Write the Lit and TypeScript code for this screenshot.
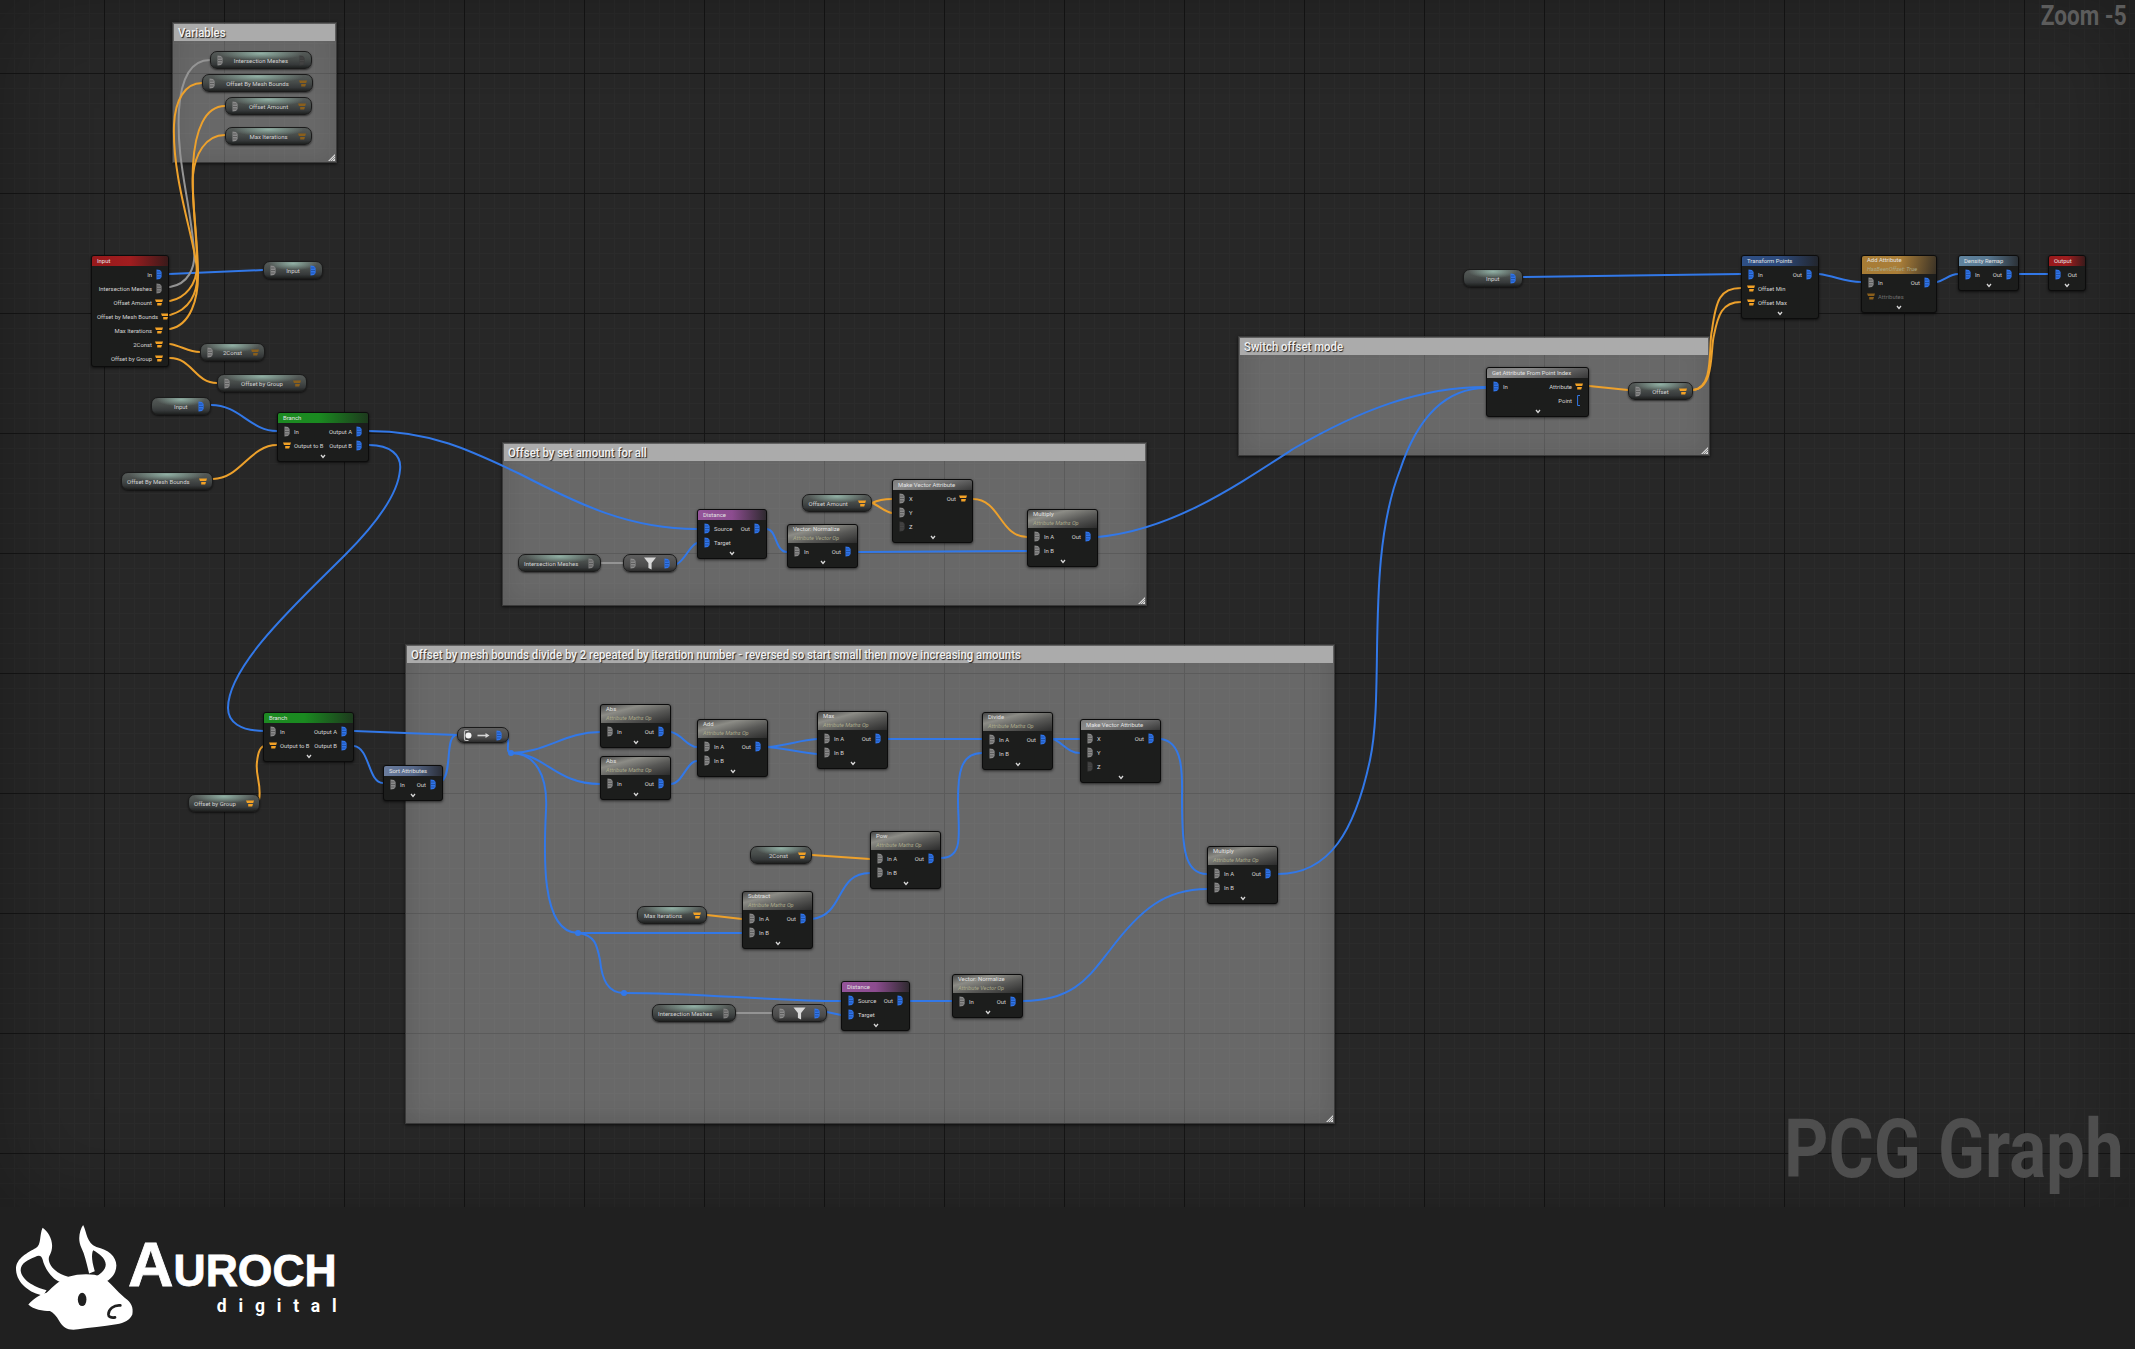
import { LitElement, html, css, svg } from "lit";
import { customElement } from "lit/decorators.js";

type Pin = "" | "g" | "b" | "o" | "d" | "h" | "m" | "n";
type Row = [Pin, string, string, Pin, boolean?];
interface NodeDef { x: number; y: number; w: number; title: string; sub?: string; tone: string; rows: Row[]; chev?: boolean; }
interface PillDef { x: number; y: number; w: number; h?: number; label?: string; l?: Pin; r?: Pin; icon?: string; lx?: number; }

const SUB = "Attribute Maths Op";
const math = (x: number, y: number, title: string, rows: Row[], sub = SUB, w = 71): NodeDef => ({ x, y, w, title, sub, tone: "math", rows, chev: true });
const ab: Row[] = [["g", "In A", "Out", "b"], ["g", "In B", "", ""]];

const NODES: NodeDef[] = [
  { x: 91, y: 255, w: 78, title: "Input", tone: "red", rows: [["", "", "In", "b"], ["", "", "Intersection Meshes", "n"], ["", "", "Offset Amount", "o"], ["", "", "Offset by Mesh Bounds", "o"], ["", "", "Max Iterations", "o"], ["", "", "2Const", "o"], ["", "", "Offset by Group", "o"]] },
  { x: 277, y: 412, w: 92, title: "Branch", tone: "green", chev: true, rows: [["g", "In", "Output A", "b"], ["o", "Output to B", "Output B", "b"]] },
  { x: 263, y: 712, w: 91, title: "Branch", tone: "green", chev: true, rows: [["g", "In", "Output A", "b"], ["o", "Output to B", "Output B", "b"]] },
  { x: 383, y: 765, w: 60, title: "Sort Attributes", tone: "slate", chev: true, rows: [["g", "In", "Out", "b"]] },
  { x: 697, y: 509, w: 70, title: "Distance", tone: "purple", chev: true, rows: [["b", "Source", "Out", "b"], ["b", "Target", "", ""]] },
  math(787, 524, "Vector: Normalize", [["g", "In", "Out", "b"]], "Attribute Vector Op"),
  { x: 892, y: 479, w: 81, title: "Make Vector Attribute", tone: "gray", chev: true, rows: [["g", "X", "Out", "o"], ["g", "Y", "", ""], ["d", "Z", "", ""]] },
  math(1027, 509, "Multiply", ab),
  math(600, 704, "Abs", [["g", "In", "Out", "b"]]),
  math(600, 756, "Abs", [["g", "In", "Out", "b"]]),
  math(697, 719, "Add", ab),
  math(817, 711, "Max", ab),
  math(982, 712, "Divide", ab),
  { x: 1080, y: 719, w: 81, title: "Make Vector Attribute", tone: "gray", chev: true, rows: [["g", "X", "Out", "b"], ["g", "Y", "", ""], ["d", "Z", "", ""]] },
  math(1207, 846, "Multiply", ab),
  math(870, 831, "Pow", ab),
  math(742, 891, "Subtract", ab),
  { x: 841, y: 981, w: 69, title: "Distance", tone: "purple", chev: true, rows: [["b", "Source", "Out", "b"], ["b", "Target", "", ""]] },
  math(952, 974, "Vector: Normalize", [["g", "In", "Out", "b"]], "Attribute Vector Op"),
  { x: 1486, y: 367, w: 103, title: "Get Attribute From Point Index", tone: "gray", chev: true, rows: [["b", "In", "Attribute", "o"], ["", "", "Point", "h"]] },
  { x: 1741, y: 255, w: 78, title: "Transform Points", tone: "blue", chev: true, rows: [["b", "In", "Out", "b"], ["o", "Offset Min", "", ""], ["o", "Offset Max", "", ""]] },
  { x: 1861, y: 255, w: 76, title: "Add Attribute", sub: "HasBeenOffset: True", tone: "amber", chev: true, rows: [["g", "In", "Out", "b"], ["m", "Attributes", "", "", true]] },
  { x: 1958, y: 255, w: 61, title: "Density Remap", tone: "steel", chev: true, rows: [["b", "In", "Out", "b"]] },
  { x: 2048, y: 255, w: 38, title: "Output", tone: "red", chev: true, rows: [["b", "", "Out", ""]] },
];

const PILLS: PillDef[] = [
  { x: 210, y: 51, w: 102, label: "Intersection Meshes", l: "g", r: "d" },
  { x: 202, y: 74, w: 111, label: "Offset By Mesh Bounds", l: "g", r: "m" },
  { x: 225, y: 97, w: 87, label: "Offset Amount", l: "g", r: "m" },
  { x: 225, y: 127, w: 87, label: "Max Iterations", l: "g", r: "m" },
  { x: 263, y: 261, w: 60, label: "Input", l: "g", r: "b" },
  { x: 200, y: 343, w: 65, label: "2Const", l: "g", r: "m" },
  { x: 217, y: 374, w: 90, label: "Offset by Group", l: "g", r: "m" },
  { x: 151, y: 397, w: 60, label: "Input", r: "b", lx: 23 },
  { x: 121, y: 472, w: 92, label: "Offset By Mesh Bounds", r: "o", lx: 5 },
  { x: 188, y: 794, w: 72, label: "Offset by Group", r: "o", lx: 6 },
  { x: 518, y: 554, w: 83, label: "Intersection Meshes", r: "n", lx: 6 },
  { x: 623, y: 554, w: 54, l: "g", r: "b", icon: "funnel" },
  { x: 802, y: 494, w: 70, label: "Offset Amount", r: "o", lx: 6.5 },
  { x: 750, y: 846, w: 62, label: "2Const", r: "o", lx: 19 },
  { x: 637, y: 906, w: 70, label: "Max Iterations", r: "o", lx: 7 },
  { x: 652, y: 1004, w: 84, label: "Intersection Meshes", r: "n", lx: 6 },
  { x: 772, y: 1004, w: 55, l: "g", r: "b", icon: "funnel" },
  { x: 1463, y: 269, w: 60, label: "Input", r: "b", lx: 23 },
  { x: 1628, y: 382, w: 65, label: "Offset", l: "g", r: "o" },
  { x: 457, y: 727, w: 52, h: 16, r: "b", icon: "arrow" },
];

const BLUE = "#3278e8", ORANGE = "#eda12c", GRAY = "#949494";
const WIRES: [string, string][] = [
  [BLUE, "M169 274 L263 270"],
  [GRAY, "M170 287 C 188 284 196 268 194 250 C 190 200 176 160 179 110 C 181 80 190 60 210 60"],
  [ORANGE, "M170 301 C 185 298 197 285 197 265 C 197 230 191 200 193 165 C 195 130 205 106 225 106"],
  [ORANGE, "M170 315 C 188 310 199 295 197 270 C 195 240 172 180 174 125 C 175 100 185 83 202 83"],
  [ORANGE, "M170 329 C 190 325 199 300 198 270 C 197 230 191 195 193 175 C 195 155 205 135 225 135"],
  [ORANGE, "M170 344 C 182 346 188 352 200 352"],
  [ORANGE, "M170 358 C 192 358 195 383 217 383"],
  [BLUE, "M211 405 C 240 405 250 431 277 431"],
  [ORANGE, "M213 479 C 240 479 250 445 277 445"],
  [BLUE, "M369 431 C 430 431 470 450 520 474 C 580 505 630 529 697 529"],
  [BLUE, "M369 445 C 390 445 402 455 400 470 C 398 495 375 525 345 555 C 300 600 228 665 228 708 C 228 722 240 731 265 731"],
  [ORANGE, "M259 800 C 262 785 255 775 257 762 C 258 752 260 746 265 746"],
  [BLUE, "M354 731 L457 735"],
  [BLUE, "M354 746 C 370 748 368 783 383 783"],
  [BLUE, "M443 780 C 452 770 445 735 457 735"],
  [BLUE, "M505 736 C 512 738 504 753 511 753"],
  [BLUE, "M511 753 C 545 753 565 732 600 732"],
  [BLUE, "M511 753 C 545 753 555 784 600 784"],
  [BLUE, "M511 753 C 535 753 548 775 546 810 C 544 850 540 933 578 933"],
  [BLUE, "M578 933 L742 933"],
  [BLUE, "M578 933 C 595 935 597 945 600 960 C 602 980 608 993 624 993"],
  [BLUE, "M624 993 C 700 993 770 1001 841 1001"],
  [GRAY, "M736 1013 L772 1013"],
  [BLUE, "M827 1012 L841 1015"],
  [BLUE, "M910 1001 L952 1001"],
  [BLUE, "M1023 1001 C 1075 1001 1090 975 1110 950 C 1140 910 1165 889 1207 889"],
  [BLUE, "M671 732 C 682 734 687 747 697 747"],
  [BLUE, "M671 784 C 682 784 687 761 697 761"],
  [BLUE, "M767 747 C 785 746 800 740 817 739"],
  [BLUE, "M767 747 C 785 748 800 753 817 754"],
  [BLUE, "M887 739 L982 739"],
  [BLUE, "M1053 739 L1080 739"],
  [BLUE, "M1053 739 C 1062 742 1068 753 1080 753"],
  [BLUE, "M1161 739 C 1185 742 1182 780 1182 800 C 1182 850 1185 874 1207 874"],
  [BLUE, "M941 858 C 965 858 958 830 958 800 C 958 775 960 753 982 753"],
  [BLUE, "M812 919 C 845 915 835 873 870 873"],
  [ORANGE, "M812 855 L870 859"],
  [ORANGE, "M707 915 L742 919"],
  [BLUE, "M1278 874 C 1330 874 1355 830 1370 760 C 1385 690 1365 560 1400 470 C 1420 410 1450 388 1486 388"],
  [BLUE, "M1098 537 C 1170 530 1230 490 1293 449 C 1360 410 1420 387 1486 387"],
  [GRAY, "M601 563 L623 563"],
  [BLUE, "M677 564 C 685 560 690 545 697 543"],
  [BLUE, "M767 529 C 777 530 775 552 787 552"],
  [BLUE, "M859 552 L1027 551"],
  [ORANGE, "M872 503 C 878 500 885 499 892 499"],
  [ORANGE, "M872 503 C 878 505 885 512 892 513"],
  [ORANGE, "M973 499 C 1000 499 1000 537 1027 537"],
  [ORANGE, "M1589 386 L1628 390"],
  [ORANGE, "M1693 390 C 1715 388 1708 345 1712 330 C 1716 300 1720 288 1741 288"],
  [ORANGE, "M1693 390 C 1715 388 1710 350 1714 335 C 1718 315 1722 302 1741 302"],
  [BLUE, "M1523 277 L1741 274"],
  [BLUE, "M1819 274 C 1835 276 1845 282 1861 282"],
  [BLUE, "M1937 282 C 1945 280 1950 274 1958 274"],
  [BLUE, "M2019 274 L2048 274"],
];

const DOTS = [[511, 753], [578, 933], [624, 993]];

const COMMENTS = [
  { x: 172, y: 22, w: 165, h: 141, t: "Variables" },
  { x: 502, y: 442, w: 645, h: 164, t: "Offset by set amount for all" },
  { x: 405, y: 644, w: 930, h: 480, t: "Offset by mesh bounds divide by 2 repeated by iteration number - reversed so start small then move increasing amounts" },
  { x: 1238, y: 336, w: 472, h: 120, t: "Switch offset mode" },
];

const pinIcon = (k: Pin) => {
  if (!k) return html`<span class="pin"></span>`;
  if (k === "o" || k === "m") {
    const c = k === "o" ? "#f2a126" : "#8a5f1c";
    return html`<svg class="pin" viewBox="0 0 8 11">${svg`<path fill=${c} d="M0 2.5 H8 L7.2 5 H1 Z M2.2 6 H7 L6.2 8.4 H2.2 Z"/>`}</svg>`;
  }
  if (k === "h") {
    return html`<svg class="pin" viewBox="0 0 8 11">${svg`<path fill="none" stroke="#3278e8" stroke-width="1" d="M5 .5 H2.6 V10.5 H5"/>`}</svg>`;
  }
  const fill = k === "b" ? "#2f74ea" : k === "d" ? "#3d3d3d" : k === "n" ? "#808080" : "#8a8a8a";
  const st = k === "b" ? "#1b468f" : "#4c4c4c";
  return html`<svg class="pin" viewBox="0 0 8 11">${svg`<path fill=${fill} d="M1.5 .4 L5 1 L6.6 3 V8 L5 10 L1.5 10.6 Z"/><path stroke=${st} stroke-width=".7" fill="none" d="M2 3 H5.5 M2 5.5 H6 M2 8 H5.5"/>`}</svg>`;
};

@customElement("app-root")
export class AppRoot extends LitElement {
  static styles = css`
    :host { display: block; width: 2135px; height: 1349px; overflow: hidden; background: #202020; font-family: Roboto, "Liberation Sans", sans-serif; }
    .canvas { position: relative; width: 2135px; height: 1207px; overflow: hidden; background-color: #272727; }
    .majors { position: absolute; inset: 0;
      background-image: linear-gradient(to right, #151515 1px, transparent 1px), linear-gradient(to bottom, #151515 1px, transparent 1px);
      background-size: 120px 120px; background-position: 104px 73px; }
    .base { position: absolute; inset: 0; background-color: #272727;
      background-image: linear-gradient(to right, #2b2b2b 1px, transparent 1px), linear-gradient(to bottom, #2b2b2b 1px, transparent 1px);
      background-size: 15px 15px; background-position: 14px 13px; }
    .vignette { position: absolute; inset: 0; box-shadow: inset 0 0 90px rgba(0,0,0,.28); }
    .comment { position: absolute; box-sizing: border-box; background: rgba(255,255,255,.3); border: 1px solid #3a3a3a;
      box-shadow: 0 1px 3px rgba(0,0,0,.7), inset 0 0 24px rgba(0,0,0,.12); padding: 1px; }
    .comment header { background: #ababab; height: 17px; display: flex; align-items: center; padding-left: 4px; }
    .comment header span { display: inline-block; white-space: nowrap; color: #f2f2f2; font-size: 12.5px; font-weight: 500; transform: scaleX(.91); transform-origin: left center; text-shadow: 1px 1px 1px rgba(0,0,0,.85); }
    .grip { position: absolute; right: 1px; bottom: 1px; width: 7px; height: 7px; }
    .wires { position: absolute; left: 0; top: 0; }
    .node { position: absolute; box-sizing: border-box; border: 1px solid #0c0c0c; border-radius: 3px; background: #1c1d1c; box-shadow: 0 1px 3px rgba(0,0,0,.65); overflow: hidden; }
    .head { height: 10px; padding: 0 5px; display: flex; flex-direction: column; justify-content: center; overflow: hidden; }
    .head.two { height: 18px; justify-content: flex-start; }
    .head b { font-weight: 400; font-size: 5.9px; line-height: 9px; color: #e2e2e2; white-space: nowrap; }
    .head i { font-size: 5.6px; line-height: 9px; color: #abab8c; white-space: nowrap; }
    .math { background: linear-gradient(165deg, #484848 0%, #8c8c86 30%, #585856 62%, #2c2c2c 100%); }
    .gray { background: linear-gradient(165deg, #7c7c7c 0%, #8a8a8a 30%, #383838 100%); }
    .red { background: linear-gradient(90deg, #97191b 0%, #a01d1f 50%, #3a1a1a 100%); }
    .green { background: linear-gradient(90deg, #1d8a22 0%, #1a8a20 45%, #1d3a1d 100%); }
    .slate { background: linear-gradient(90deg, #6b7d9e 0%, #56688a 50%, #2a2e38 100%); }
    .purple { background: linear-gradient(90deg, #94549a 0%, #8c4c8f 50%, #2f2a30 100%); }
    .blue { background: linear-gradient(90deg, #2e4f85 0%, #2d4a7c 50%, #22262e 100%); }
    .amber { background: linear-gradient(100deg, #a77c35 0%, #aa7e38 50%, #3a3226 100%); }
    .steel { background: linear-gradient(90deg, #60849f 0%, #56768f 50%, #2c3238 100%); }
    .rows { padding-top: 1.5px; }
    .row { height: 14px; display: flex; align-items: center; padding: 0 5px; font-size: 5.9px; color: #d4d4d4; white-space: nowrap; }
    .row .sp { flex: 1; }
    .row .ll { margin-left: 3px; }
    .row .rl { margin-right: 3px; }
    .row.dim { color: #6d6d6d; }
    .pin { width: 8px; height: 11px; flex: none; display: block; }
    .chev { height: 8px; display: flex; justify-content: center; align-items: center; }
    .chev svg { width: 6px; height: 5px; }
    .pill { position: absolute; box-sizing: border-box; height: 18px; border: 1px solid #1b1b1b; border-radius: 7px; display: flex; align-items: center; padding: 0 5px; gap: 1px;
      background: radial-gradient(ellipse 42% 42% at 50% 10%, rgba(165,205,190,.75), transparent), linear-gradient(#555a58 0%, #474c4a 45%, #36393a 78%, #1f2120 100%);
      box-shadow: 0 1px 2px rgba(0,0,0,.6); color: #d4d4d4; font-size: 6px; }
    .pill .lab { flex: 1; text-align: center; white-space: nowrap; }
    .pill .lab.start { text-align: left; }
    .pill.icon { background: linear-gradient(#5e5e5e, #4a4a4a 70%, #2c2c2c); }
    .pill svg.glyph { flex: 1; height: 13px; }
    .dot { position: absolute; width: 6px; height: 6px; margin: -3px 0 0 -3px; border-radius: 50%; background: #3278e8; }
    .mark { position: absolute; white-space: nowrap; font-weight: 700; line-height: 1; }
    .pcg { left: 1784px; top: 1108px; font-size: 82px; color: #4e4e4e; transform-origin: left top; transform: scaleX(.842); }
    .zoom { right: 8px; top: 2px; font-size: 28px; color: #5c5c5c; transform-origin: right top; transform: scaleX(.806); }
    footer { height: 142px; background: #202020; display: flex; align-items: flex-start; padding: 16px 0 0 16px; box-sizing: border-box; }
    .bull { width: 118px; height: 108px; flex: none; }
    .word { margin: 11px 0 0 -6px; color: #fff; font-family: "Liberation Sans", sans-serif; font-weight: 700; display: flex; flex-direction: column; align-items: flex-end; }
    .auroch { font-size: 44.5px; line-height: 60px; height: 60px; white-space: nowrap; -webkit-text-stroke: .8px #fff; }
    .auroch span { font-size: 63px; }
    .digital { font-family: Roboto, sans-serif; font-weight: 700; font-size: 17.5px; line-height: 20px; letter-spacing: 11.8px; margin-right: -11.8px; margin-top: 2px; }
  `;

  private comment(c: (typeof COMMENTS)[number]) {
    return html`<section class="comment" style="left:${c.x}px;top:${c.y}px;width:${c.w}px;height:${c.h}px">
      <header><span>${c.t}</span></header>
      <svg class="grip" viewBox="0 0 7 7">${svg`<path fill="#d6d6d6" d="M7 0 V7 H0 Z"/><path stroke="#555" stroke-width=".6" d="M7 2 L2 7 M7 4 L4 7"/>`}</svg>
    </section>`;
  }

  private node(n: NodeDef) {
    return html`<div class="node" style="left:${n.x}px;top:${n.y}px;width:${n.w}px">
      <div class="head ${n.sub ? "two" : ""} ${n.tone}"><b>${n.title}</b>${n.sub ? html`<i>${n.sub}</i>` : ""}</div>
      <div class="rows">
        ${n.rows.map((r) => html`<div class="row ${r[4] ? "dim" : ""}">
          ${r[0] ? pinIcon(r[0]) : ""}${r[1] ? html`<span class="ll">${r[1]}</span>` : ""}
          <span class="sp"></span>
          ${r[2] ? html`<span class="rl">${r[2]}</span>` : ""}${r[3] ? pinIcon(r[3]) : ""}
        </div>`)}
      </div>
      ${n.chev ? html`<div class="chev"><svg viewBox="0 0 6 5">${svg`<path fill="none" stroke="#d8d8d8" stroke-width="1.3" d="M1 1 L3 3.4 L5 1"/>`}</svg></div>` : ""}
    </div>`;
  }

  private pill(p: PillDef) {
    const glyph = p.icon === "funnel"
      ? html`<svg class="glyph" viewBox="0 0 20 13">${svg`<path fill="#d8d8d8" d="M4 .5 H16 L11.6 6 V12.5 L8.4 11 V6 Z"/>`}</svg>`
      : p.icon === "arrow"
      ? html`<svg class="glyph" viewBox="0 0 30 13">${svg`<path fill="none" stroke="#c4c4c4" stroke-width="1.2" d="M5 1.5 H2.5 Q1 1.5 1 3 V10 Q1 11.5 2.5 11.5 H5"/><circle cx="5" cy="6.5" r="3" fill="#f4f4f4"/><path stroke="#d4d4d4" stroke-width="1.6" d="M14 6.5 H23"/><path fill="#d4d4d4" d="M22 4 L26 6.5 L22 9 Z"/>`}</svg>`
      : p.lx !== undefined
      ? html`<span class="lab start" style="padding-left:${p.lx - 6}px">${p.label}</span>`
      : html`<span class="lab">${p.label}</span>`;
    return html`<div class="pill ${p.icon ? "icon" : ""}" style="left:${p.x}px;top:${p.y}px;width:${p.w}px;height:${p.h ?? 18}px">
      ${p.l ? pinIcon(p.l) : ""}${glyph}${p.r ? pinIcon(p.r) : ""}
    </div>`;
  }

  render() {
    return html`
      <div class="canvas">
        <div class="base"></div>
        <div class="majors"></div>
        <div class="vignette"></div>
        ${COMMENTS.map((c) => this.comment(c))}
        <svg class="wires" width="2135" height="1207" viewBox="0 0 2135 1207" fill="none" stroke-linecap="round">
          ${WIRES.map(([c, d]) => svg`<path d=${d} stroke=${c} stroke-width="2"/>`)}
        </svg>
        ${NODES.map((n) => this.node(n))}
        ${PILLS.map((p) => this.pill(p))}
        ${DOTS.map(([x, y]) => html`<span class="dot" style="left:${x}px;top:${y}px"></span>`)}
        <div class="mark pcg">PCG Graph</div>
        <div class="mark zoom">Zoom -5</div>
      </div>
      <footer>
        <svg class="bull" viewBox="48 70 355 325">${svg`
          <g fill="#fff">
            <path d="M128 84 C150 100 168 135 148 170 C140 190 165 222 205 232 L190 250 C160 245 135 210 128 180 C125 168 118 165 105 172 C85 180 62 190 62 212 C64 240 100 262 140 272 L130 288 C90 282 48 250 48 208 C48 175 85 158 108 145 C125 135 118 105 128 84 Z"/>
            <path d="M250 76 C262 100 260 130 290 142 C325 150 350 170 350 198 C350 220 335 240 315 248 L280 235 C295 228 318 215 318 195 C318 175 295 160 280 152 C275 165 275 180 285 215 L268 222 C260 190 255 165 245 145 C232 120 240 90 250 76 Z"/>
            <path d="M85 315 C105 295 120 285 140 280 C160 262 180 240 205 232 C240 222 280 222 305 232 C335 250 350 275 375 295 C395 308 402 325 398 345 C390 362 375 370 350 375 C310 382 270 385 235 390 C205 395 190 385 178 365 C170 350 160 340 150 335 C130 335 100 330 85 315 Z"/>
          </g>
          <ellipse cx="247" cy="300" rx="13" ry="20" fill="#202020"/>
          <path d="M362 318 C342 316 326 330 326 345 C326 352 334 356 346 354" fill="none" stroke="#202020" stroke-width="8" stroke-linecap="round"/>
        `}</svg>
        <div class="word">
          <div class="auroch"><span>A</span>UROCH</div>
          <div class="digital">digital</div>
        </div>
      </footer>
    `;
  }
}
